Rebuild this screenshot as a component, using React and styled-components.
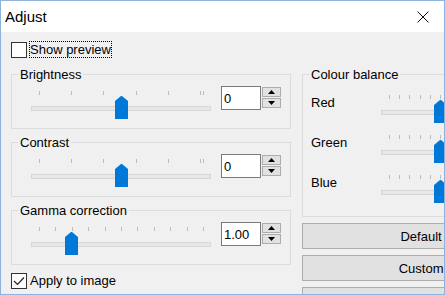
import React from 'react';
import styled, { createGlobalStyle } from 'styled-components';

const GlobalStyle = createGlobalStyle`
  body {
    margin: 0;
    background: #ffffff;
  }
`;

const Window = styled.div`
  width: 445px;
  height: 295px;
  box-sizing: border-box;
  border: 1px solid #8fb3da;
  overflow: hidden;
  background: #f0f0f0;
  display: flex;
  flex-direction: column;
  font-family: "Liberation Sans", Arial, sans-serif;
  font-size: 13px;
  color: #000;
`;

const TitleBar = styled.div`
  height: 31px;
  flex-shrink: 0;
  background: #ffffff;
  display: flex;
  align-items: center;
  justify-content: space-between;
  padding: 0 15px 0 4px;
`;

const Title = styled.span`
  font-size: 15px;
  line-height: 18px;
  color: #000;
`;

const Body = styled.div`
  flex: 1;
  padding: 9px 10px 0 10px;
  display: flex;
  flex-direction: column;
`;

const CheckRow = styled.label`
  display: flex;
  align-items: center;
  height: 17px;
  gap: 2px;
  margin-top: ${(p) => p.$top || 0}px;
`;

const Box = styled.span`
  width: 16px;
  height: 16px;
  box-sizing: border-box;
  border: 1px solid #333333;
  background: #ffffff;
  display: flex;
  align-items: center;
  justify-content: center;
`;

const CheckText = styled.span`
  line-height: 15px;
  border: 1px dotted ${(p) => (p.$focused ? '#000' : 'transparent')};
`;

const Main = styled.div`
  display: flex;
  gap: 11px;
  margin-top: 9px;
`;

const LeftCol = styled.div`
  width: 280px;
  flex-shrink: 0;
  display: flex;
  flex-direction: column;
  gap: 6px;
`;

const RightCol = styled.div`
  width: 275px;
  flex-shrink: 0;
  display: flex;
  flex-direction: column;
`;

const Group = styled.fieldset`
  margin: 0;
  padding: 0;
  min-width: 0;
  border: 1px solid #dcdcdc;
`;

const Legend = styled.legend`
  margin-left: 6px;
  padding: 0 2px;
  line-height: 15px;
  font-size: 13px;
`;

const SliderRow = styled.div`
  display: flex;
  align-items: flex-start;
  padding: 4px 9px 9px 19px;
`;

const SliderBox = styled.div`
  position: relative;
  width: ${(p) => p.$w}px;
  height: 28px;
  flex-shrink: 0;
  margin-top: ${(p) => p.$top || 0}px;
`;

const Ticks = styled.svg`
  display: block;
`;

const Track = styled.div`
  margin-top: 11px;
  height: 5px;
  box-sizing: border-box;
  background: #e7e7e7;
  border: 1px solid #d6d6d6;
`;

const Thumb = styled.svg`
  position: absolute;
  top: 5px;
`;

const NumberBox = styled.input`
  width: 40px;
  height: 24px;
  box-sizing: border-box;
  margin: 0 0 0 10px;
  padding: 0 0 0 2px;
  border: 1px solid #7a7a7a;
  border-radius: 0;
  background: #ffffff;
  font-family: inherit;
  font-size: 13px;
  color: #000;
  outline: none;
`;

const Spinner = styled.div`
  display: flex;
  flex-direction: column;
  gap: 1px;
  margin: 1px 0 0 1px;
`;

const SpinButton = styled.div`
  width: 19px;
  height: 10px;
  box-sizing: border-box;
  border: 1px solid #adadad;
  background: #e1e1e1;
  display: flex;
  align-items: center;
  justify-content: center;
`;

const ColourInner = styled.div`
  display: flex;
  flex-direction: column;
  gap: 12px;
  padding: 13px 0 13px 8px;
`;

const ColourRow = styled.div`
  display: flex;
  align-items: flex-start;
`;

const ColourLabel = styled.span`
  width: 70px;
  flex-shrink: 0;
  line-height: 15px;
`;

const PushButton = styled.button`
  height: 26px;
  width: 100%;
  margin: 6px 0 0 0;
  padding: 0;
  border: 1px solid #adadad;
  border-radius: 0;
  background: #e1e1e1;
  font-family: inherit;
  font-size: 13px;
  color: #000;
`;

const Slider = ({ width = 180, min, max, step, value, top }) => {
  const inset = 7.7;
  const span = width - inset * 2;
  const px = (v) => inset + ((v - min) / (max - min)) * span;
  const ticks = [];
  for (let v = min; v < max; v += step) ticks.push(v);
  ticks.push(max);
  return (
    <SliderBox $w={width} $top={top}>
      <Ticks width={width} height={4}>
        {ticks.map((t) => (
          <rect key={t} x={Math.round(px(t))} y={0} width={1} height={4} fill="#bcbcbc" />
        ))}
      </Ticks>
      <Track />
      <Thumb width={13} height={23} style={{ left: Math.round(px(value) - 6.5) }}>
        <polygon points="0,5 6,0 7,0 13,5 13,23 0,23" fill="#0078d7" />
      </Thumb>
    </SliderBox>
  );
};

const Arrow = ({ up }) => (
  <svg width={7} height={4}>
    <polygon points={up ? '3.5,0 7,4 0,4' : '0,0 7,0 3.5,4'} fill="#000" />
  </svg>
);

const SliderGroup = ({ title, value, slider }) => (
  <Group>
    <Legend>{title}</Legend>
    <SliderRow>
      <Slider {...slider} top={5} />
      <NumberBox readOnly value={value} />
      <Spinner>
        <SpinButton><Arrow up /></SpinButton>
        <SpinButton><Arrow /></SpinButton>
      </Spinner>
    </SliderRow>
  </Group>
);

const wideRange = { min: -255, max: 255, step: 100, value: 0 };
const colourRange = { min: -80, max: 80, step: 10, value: -30 };

const App = () => (
  <>
    <GlobalStyle />
    <Window>
      <TitleBar>
        <Title>Adjust</Title>
        <svg width={12} height={12}>
          <path d="M0.5 0.5 L11.5 11.5 M11.5 0.5 L0.5 11.5" stroke="#111" strokeWidth={1} />
        </svg>
      </TitleBar>
      <Body>
        <CheckRow>
          <Box />
          <CheckText $focused>Show preview</CheckText>
        </CheckRow>
        <Main>
          <LeftCol>
            <SliderGroup title="Brightness" value="0" slider={wideRange} />
            <SliderGroup title="Contrast" value="0" slider={wideRange} />
            <SliderGroup
              title="Gamma correction"
              value="1.00"
              slider={{ min: 0, max: 10, step: 1, value: 2 }}
            />
            <CheckRow $top={1}>
              <Box>
                <svg width={12} height={10}>
                  <polyline points="1,5 4.5,8.5 11,1.5" fill="none" stroke="#222" strokeWidth={1.2} />
                </svg>
              </Box>
              <CheckText>Apply to image</CheckText>
            </CheckRow>
          </LeftCol>
          <RightCol>
            <Group>
              <Legend>Colour balance</Legend>
              <ColourInner>
                {['Red', 'Green', 'Blue'].map((c) => (
                  <ColourRow key={c}>
                    <ColourLabel>{c}</ColourLabel>
                    <Slider {...colourRange} />
                  </ColourRow>
                ))}
              </ColourInner>
            </Group>
            <PushButton>Default levels</PushButton>
            <PushButton>Custom levels</PushButton>
            <PushButton>Auto levels</PushButton>
          </RightCol>
        </Main>
      </Body>
    </Window>
  </>
);

export default App;
